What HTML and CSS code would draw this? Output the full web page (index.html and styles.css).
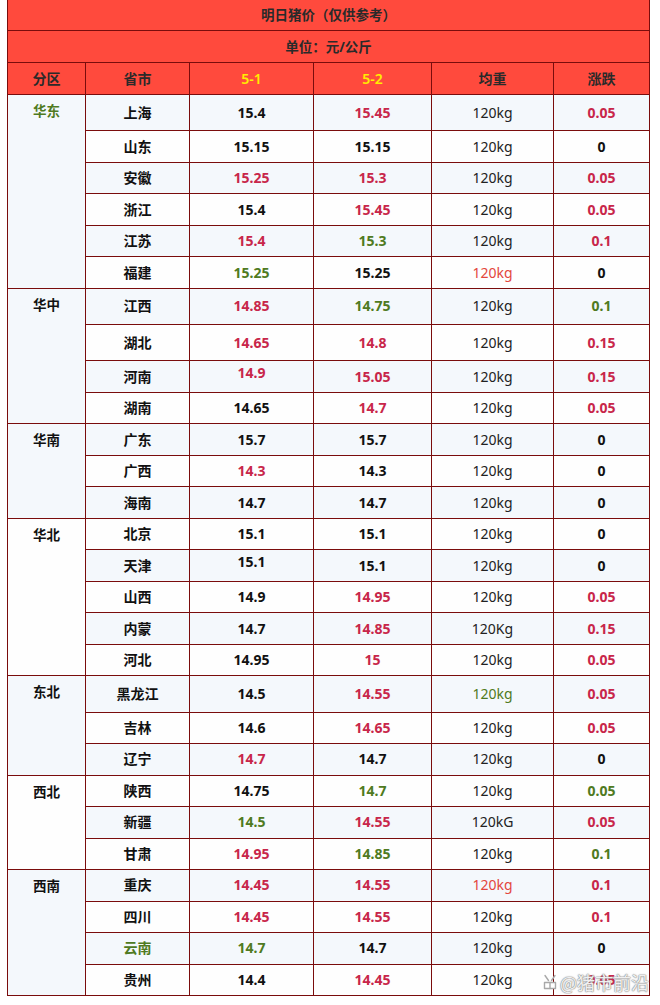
FILE: index.html
```html
<!DOCTYPE html>
<html lang="zh">
<head>
<meta charset="utf-8">
<title>明日猪价</title>
<link rel="stylesheet" href="styles.css">
</head>
<body>
<div class="page">
<table class="price">
  <colgroup>
    <col class="c-area"><col class="c-prov"><col class="c-d1"><col class="c-d2"><col class="c-wt"><col class="c-chg">
  </colgroup>
  <thead>
    <tr class="h1"><th colspan="6">明日猪价（仅供参考）</th></tr>
    <tr class="h2"><th colspan="6">单位：元/公斤</th></tr>
    <tr class="h3"><th>分区</th><th>省市</th><th class="date">5-1</th><th class="date">5-2</th><th>均重</th><th>涨跌</th></tr>
  </thead>
  <tbody>
    <tr class="odd tall"><td class="area green" rowspan="6">华东</td><td>上海</td><td>15.4</td><td class="red">15.45</td><td class="wt">120kg</td><td class="red">0.05</td></tr>
    <tr class="even"><td>山东</td><td>15.15</td><td>15.15</td><td class="wt">120kg</td><td>0</td></tr>
    <tr class="odd"><td>安徽</td><td class="red">15.25</td><td class="red">15.3</td><td class="wt">120kg</td><td class="red">0.05</td></tr>
    <tr class="even"><td>浙江</td><td>15.4</td><td class="red">15.45</td><td class="wt">120kg</td><td class="red">0.05</td></tr>
    <tr class="odd"><td>江苏</td><td class="red">15.4</td><td class="green">15.3</td><td class="wt">120kg</td><td class="red">0.1</td></tr>
    <tr class="even"><td>福建</td><td class="green">15.25</td><td>15.25</td><td class="wt lightred">120kg</td><td>0</td></tr>

    <tr class="odd tall"><td class="area" rowspan="4">华中</td><td>江西</td><td class="red">14.85</td><td class="green">14.75</td><td class="wt">120kg</td><td class="green">0.1</td></tr>
    <tr class="even tall"><td>湖北</td><td class="red">14.65</td><td class="red">14.8</td><td class="wt">120kg</td><td class="red">0.15</td></tr>
    <tr class="odd"><td>河南</td><td class="red up">14.9</td><td class="red">15.05</td><td class="wt">120kg</td><td class="red">0.15</td></tr>
    <tr class="even"><td>湖南</td><td>14.65</td><td class="red">14.7</td><td class="wt">120kg</td><td class="red">0.05</td></tr>

    <tr class="odd"><td class="area" rowspan="3">华南</td><td>广东</td><td>15.7</td><td>15.7</td><td class="wt">120kg</td><td>0</td></tr>
    <tr class="even"><td>广西</td><td class="red">14.3</td><td>14.3</td><td class="wt">120kg</td><td>0</td></tr>
    <tr class="odd"><td>海南</td><td>14.7</td><td>14.7</td><td class="wt">120kg</td><td>0</td></tr>

    <tr class="even"><td class="area" rowspan="5">华北</td><td>北京</td><td>15.1</td><td>15.1</td><td class="wt">120kg</td><td>0</td></tr>
    <tr class="odd"><td>天津</td><td class="up">15.1</td><td>15.1</td><td class="wt">120kg</td><td>0</td></tr>
    <tr class="even"><td>山西</td><td>14.9</td><td class="red">14.95</td><td class="wt">120kg</td><td class="red">0.05</td></tr>
    <tr class="odd"><td>内蒙</td><td>14.7</td><td class="red">14.85</td><td class="wt">120Kg</td><td class="red">0.15</td></tr>
    <tr class="even"><td>河北</td><td>14.95</td><td class="red">15</td><td class="wt">120kg</td><td class="red">0.05</td></tr>

    <tr class="odd tall"><td class="area" rowspan="3">东北</td><td>黑龙江</td><td>14.5</td><td class="red">14.55</td><td class="wt green">120kg</td><td class="red">0.05</td></tr>
    <tr class="even"><td>吉林</td><td>14.6</td><td class="red">14.65</td><td class="wt">120kg</td><td class="red">0.05</td></tr>
    <tr class="odd"><td>辽宁</td><td class="red">14.7</td><td>14.7</td><td class="wt">120kg</td><td>0</td></tr>

    <tr class="even"><td class="area" rowspan="3">西北</td><td>陕西</td><td>14.75</td><td class="green">14.7</td><td class="wt">120kg</td><td class="green">0.05</td></tr>
    <tr class="odd"><td>新疆</td><td class="green">14.5</td><td class="red">14.55</td><td class="wt">120kG</td><td class="red">0.05</td></tr>
    <tr class="even"><td>甘肃</td><td class="red">14.95</td><td class="green">14.85</td><td class="wt">120kg</td><td class="green">0.1</td></tr>

    <tr class="odd"><td class="area" rowspan="4">西南</td><td>重庆</td><td class="red">14.45</td><td class="red">14.55</td><td class="wt lightred">120kg</td><td class="red">0.1</td></tr>
    <tr class="even"><td>四川</td><td class="red">14.45</td><td class="red">14.55</td><td class="wt">120kg</td><td class="red">0.1</td></tr>
    <tr class="odd"><td class="green">云南</td><td class="green">14.7</td><td>14.7</td><td class="wt">120kg</td><td>0</td></tr>
    <tr class="even"><td>贵州</td><td>14.4</td><td class="red">14.45</td><td class="wt">120kg</td><td class="red">0.05</td></tr>
  </tbody>
</table>
<div class="watermark"><svg class="wm-icon" viewBox="0 0 16 16" width="16" height="16"><g fill="#ffffff" stroke="#a8a8a8" stroke-width="1.4" stroke-linecap="round" stroke-linejoin="round"><path d="M3 1.5 L6.5 6.5 M13 1.5 L9.5 6.5" fill="none"/><path d="M2.5 8.5 H13.5 V14.5 H2.5 Z"/><path d="M8 8.5 V14.5" fill="none"/></g></svg><span class="wm-text">@猪市前沿</span></div>
</div>
</body>
</html>
```

FILE: styles.css
```css
html, body {
  margin: 0;
  padding: 0;
  background: #ffffff;
}

.page {
  position: relative;
  padding: 0 0 0 7px;
  width: 643px;
}

.price {
  border-collapse: collapse;
  table-layout: fixed;
  width: 642px;
  font-family: "Noto Sans", "Noto Sans CJK SC", sans-serif;
  font-size: 14px;
  color: #111111;
  text-align: center;
}

.c-area { width: 78px; }
.c-prov { width: 104px; }
.c-d1 { width: 124px; }
.c-d2 { width: 118px; }
.c-wt { width: 122px; }
.c-chg { width: 96px; }

.price th,
.price td {
  border: 1px solid #7a0c0c;
  padding: 0;
  line-height: 18px;
}

.price th {
  background: #ff4a3d;
  color: #2a2a2a;
  font-weight: 700;
  font-size: 13.5px;
}

.price tr.h1 th {
  border-top: 0;
  height: 30px;
}

.price tr.h2 th { height: 31px; }
.price tr.h3 th { height: 31px; font-size: 14px; font-weight: 600; }

.price th.date {
  color: #ffee00;
  font-weight: 700;
}

.price td {
  font-weight: 700;
}

.price tbody tr { height: 31.5px; }
.price tbody tr.tall { height: 36.3px; }

.price tr.odd td { background: #f4f8fc; }
.price tr.even td { background: #fefefe; }

.price td.area {
  vertical-align: top;
  padding-top: 7px;
  font-size: 13.5px;
}

.price td.wt {
  font-weight: 400;
  color: #222222;
}

.price td.red { color: #c8264a; }
.price td.green { color: #4f7a21; }
.price td.wt.green { color: #4f7a21; }
.price td.wt.lightred { color: #e3463c; }

.price td.up { padding-bottom: 8px; }

.watermark {
  position: absolute;
  left: 542px;
  top: 971px;
  display: flex;
  align-items: center;
  gap: 2px;
  font-family: "Noto Sans CJK SC", sans-serif;
  font-size: 18px;
  line-height: 22px;
}

.wm-text {
  color: rgba(255, 255, 255, 0.9);
  text-shadow: 0 0 1px #888, 0 0 1px #888, 0 0 2px #999;
}
```
